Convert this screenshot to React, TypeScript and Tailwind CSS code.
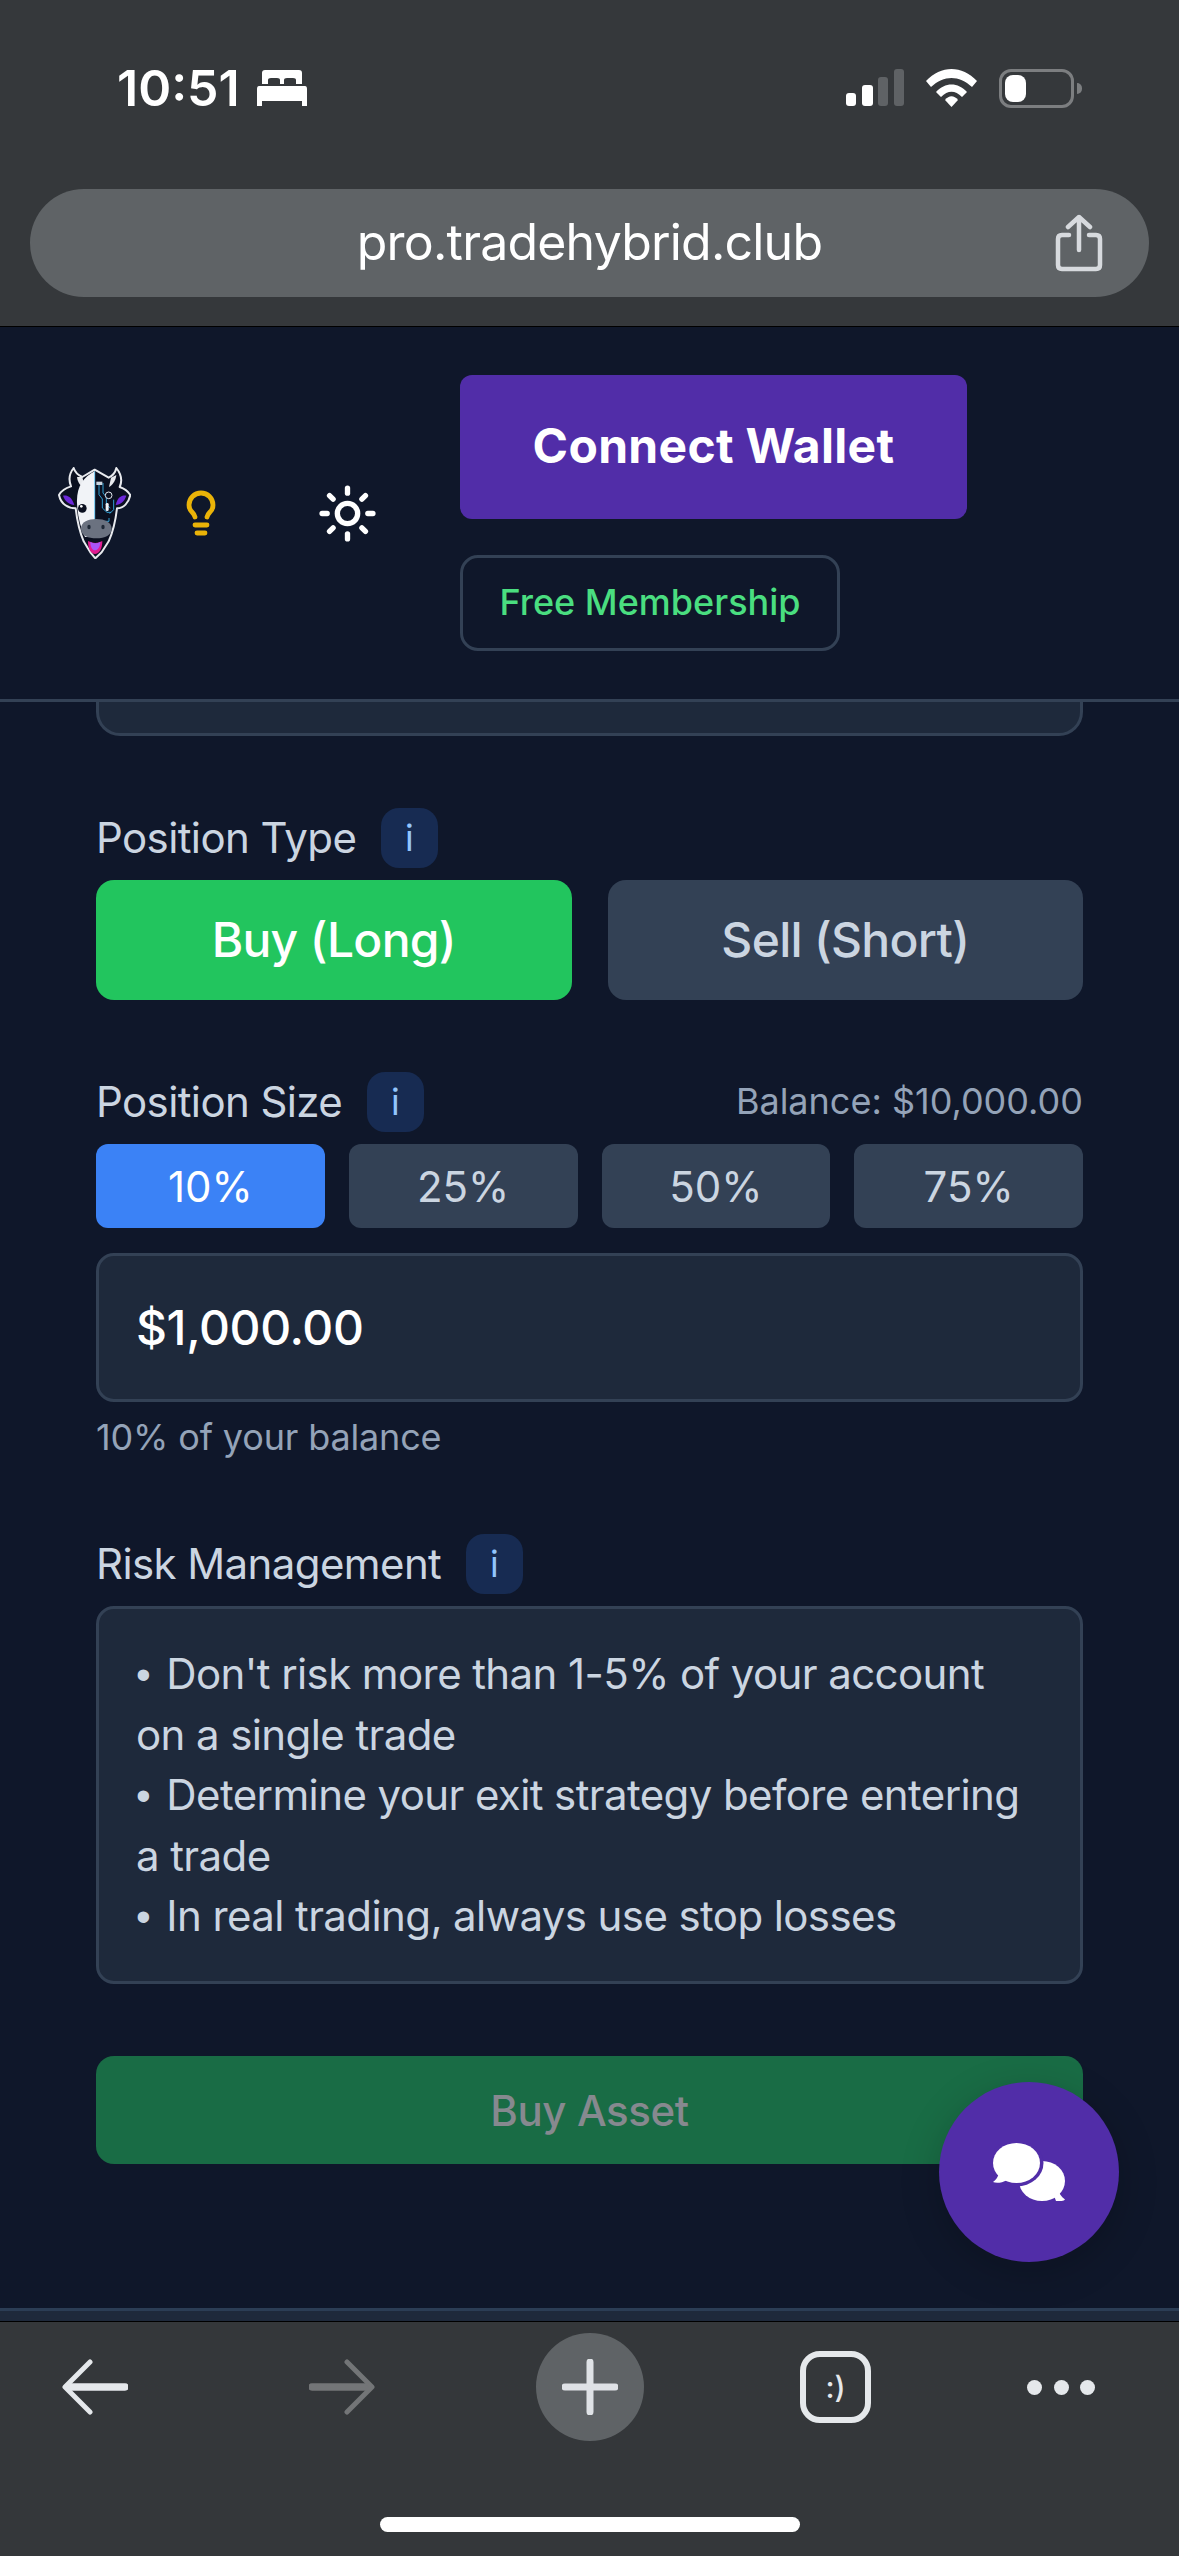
import React from "react";
import { Lightbulb, Sun } from "lucide-react";

const InfoBadge = () => (
  <span className="flex h-[60px] w-[57px] items-center justify-center rounded-[18px] bg-[#172b52] pr-[1px] text-[36px] text-[#93c5fd]">
    i
  </span>
);

const Bullet = () => <span className="mr-[5px] font-['Liberation_Sans',sans-serif]">•</span>;

const CowLogo = () => (
  <svg width="73" height="92" viewBox="55 82 215 276">
    <path
      d="M163 90 L126 112 C112 106 104 98 100 85 C88 100 84 120 92 140 C76 145 62 154 56 166 C62 195 85 206 106 206 C110 240 116 272 130 305 L150 338 L165 356 L184 338 L205 305 C220 272 226 240 230 206 C250 206 265 190 270 166 C262 153 250 146 238 142 C248 120 240 100 228 85 C225 98 218 108 205 114 Z"
      fill="#0b1020"
      stroke="#e8eaee"
      strokeWidth="6"
      strokeLinejoin="round"
    />
    <path d="M110 112 C112 130 122 140 134 146 L126 112 Z" fill="#e8eaee" />
    <path d="M228 106 C226 124 216 136 206 142 L212 114 Z" fill="#e8eaee" />
    <path d="M68 168 C82 166 94 172 102 196 C88 194 74 186 68 168 Z" fill="#6d28d9" />
    <path d="M258 168 C244 166 232 172 226 196 C240 194 252 186 258 168 Z" fill="#6d28d9" />
    <path d="M163 95 C130 112 108 140 110 190 C112 230 120 262 134 292 L163 292 Z" fill="#f1f3f7" />
    <path d="M163 95 V240" stroke="#7dd3fc" strokeWidth="3" />
    <path
      d="M176 135 V165 L186 178 V205 L200 218 H212 M188 130 V160 L198 172 V195 L210 205 M206 235 V245 H180 M220 180 V210 L208 222"
      fill="none"
      stroke="#38bdf8"
      strokeWidth="2.5"
    />
    <rect x="168" y="126" width="18" height="10" fill="#cbd5e1" />
    <circle cx="205" cy="167" r="10" fill="#0b1020" stroke="#e2e8f0" strokeWidth="3" />
    <rect x="196" y="190" width="9" height="24" rx="4" fill="#f1f5f9" />
    <circle cx="126" cy="206" r="13" fill="#0b1020" />
    <circle cx="123" cy="200" r="4" fill="#fff" />
    <path d="M122 268 C122 246 144 238 168 238 C194 238 214 248 214 268 C214 286 194 296 168 296 C144 296 122 288 122 268 Z" fill="#6b7280" />
    <ellipse cx="146" cy="262" rx="5" ry="7" fill="#1f2937" />
    <ellipse cx="188" cy="262" rx="5" ry="7" fill="#1f2937" />
    <path d="M143 304 C158 312 172 312 186 304 C186 328 176 343 164 343 C152 343 143 328 143 304 Z" fill="#e11d8f" />
    <path d="M150 306 C160 312 170 312 180 306 C180 322 172 332 164 332 C156 332 150 322 150 306 Z" fill="#a855f7" />
  </svg>
);

const ShareIcon = () => (
  <svg width="48" height="58" viewBox="0 0 48 58" fill="none" stroke="#d7dade" strokeWidth="4.5" strokeLinecap="round" strokeLinejoin="round">
    <path d="M14 21 H7 Q3 21 3 25 V51 Q3 55 7 55 H41 Q45 55 45 51 V25 Q45 21 41 21 H34" />
    <path d="M24 36 V3 M13 13 L24 3 L35 13" />
  </svg>
);

const ChatIcon = () => (
  <svg width="72" height="58" viewBox="0 0 72 58">
    <ellipse cx="49" cy="38" rx="23" ry="20" fill="#fff" />
    <path d="M60 50 L63 58 C67 58.5 71 58 72 56.5 C68 54 66 50 65 46 Z" fill="#fff" />
    <ellipse cx="23.5" cy="20" rx="27" ry="23.5" fill="#512da8" />
    <ellipse cx="23.5" cy="20" rx="23.5" ry="20" fill="#fff" />
    <path d="M6 30 C5 34 3 37 0 39 C3 40.5 9 40 14 37 Z" fill="#fff" />
  </svg>
);

const PERCENTS = ["10%", "25%", "50%", "75%"];

export default function App() {
  return (
    <div className="relative flex h-[2556px] w-[1179px] flex-col overflow-hidden bg-[#0f172a] font-['Inter',sans-serif]">
      {/* Safari top chrome */}
      <div className="h-[326px] shrink-0 bg-[#35383b] pt-[68px]">
        <div className="flex h-[40px] items-center justify-between pl-[117px] pr-[105px]">
          <div className="flex items-center">
            <span className="text-[50px] leading-[40px] font-semibold text-white">10:51</span>
            <svg className="ml-[16px]" width="52" height="36" viewBox="0 0 52 36" fill="#fff">
              <path d="M6 3 Q6 0 9 0 H43 Q46 0 46 3 V14 H40 V10 Q40 8 37 8 H31 Q28 8 28 10 V14 H24 V10 Q24 8 21 8 H15 Q12 8 12 10 V14 H6 Z" />
              <path d="M3 16 H49 Q51 16 51 19 V36 H46 V31 H6 V36 H1 V19 Q1 16 3 16 Z" />
            </svg>
          </div>
          <div className="flex items-center">
            <svg width="58" height="38" viewBox="0 0 58 38">
              <rect x="0" y="24" width="10" height="13" rx="3" fill="#fff" />
              <rect x="16" y="16" width="11" height="21" rx="3" fill="#fff" />
              <rect x="32" y="8" width="10" height="29" rx="3" fill="#5f6265" />
              <rect x="48" y="0" width="10" height="37" rx="3" fill="#5f6265" />
            </svg>
            <svg className="ml-[22px]" width="51" height="38" viewBox="0 0 51 38" fill="#fff">
              <path d="M0 12 C15 -4 36 -4 51 12 L46 18 C33 6 18 6 5 18 Z" />
              <path d="M10 23 C19 13 32 13 41 23 L36 28 C29 21 22 21 15 28 Z" />
              <path d="M19 31 C23 26 28 26 32 31 L25.5 38 Z" />
            </svg>
            <div className="relative ml-[22px] h-[39px] w-[75px] rounded-[12px] border-[3px] border-[#7c7e80] p-[3px]">
              <div className="h-full w-[21px] rounded-[8px] bg-white" />
              <div className="absolute left-[75px] top-[11px] h-[11px] w-[5px] rounded-r-full bg-[#7c7e80]" />
            </div>
          </div>
        </div>
        <div className="mx-[30px] mt-[81px] grid h-[108px] grid-cols-[1fr_auto_1fr] items-center rounded-[54px] bg-[#5f6366]">
          <span />
          <span className="pb-[2px] text-[50px] leading-none tracking-[-0.8px] text-white">pro.tradehybrid.club</span>
          <span className="flex justify-end pr-[46px]">
            <ShareIcon />
          </span>
        </div>
      </div>
      <div className="h-px shrink-0 bg-black" />

      {/* Site header */}
      <header className="flex h-[375px] shrink-0 items-center border-b-[3px] border-[#334155] pl-[58px]">
        <CowLogo />
        <Lightbulb className="ml-[46px] shrink-0 text-[#eab308]" size={48} strokeWidth={2.4} />
        <Sun className="ml-[92px] shrink-0 text-white" size={61} strokeWidth={2.1} />
        <div className="ml-[82px] flex flex-col gap-[36px]">
          <button className="flex h-[144px] w-[507px] items-center justify-center rounded-[12px] bg-[#512da8] pb-[2px] text-[48px] font-bold tracking-[0.3px] text-white">
            Connect Wallet
          </button>
          <button className="flex h-[96px] w-[380px] items-center justify-center rounded-[18px] border-[3px] border-[#334155] pb-[2px] text-[36px] font-medium text-[#4ade80]">
            Free Membership
          </button>
        </div>
      </header>

      {/* Trade form */}
      <main className="flex-1 px-[96px]">
        <div className="h-[34px] rounded-b-[24px] border-x-[3px] border-b-[3px] border-[#334155] bg-[#1e293b]" />

        <div className="mt-[72px] flex h-[60px] items-center gap-[25px]">
          <span className="pb-[2px] text-[42px] tracking-[-0.6px] text-[#cbd5e1]">Position Type</span>
          <InfoBadge />
        </div>
        <div className="mt-[12px] grid grid-cols-2 gap-[36px]">
          <button className="h-[120px] rounded-[18px] bg-[#22c55e] text-[48px] font-medium tracking-[-0.7px] text-white">Buy (Long)</button>
          <button className="h-[120px] rounded-[18px] bg-[#334155] text-[48px] font-medium tracking-[-0.7px] text-[#cbd5e1]">Sell (Short)</button>
        </div>

        <div className="mt-[72px] flex h-[60px] items-center">
          <span className="pb-[2px] text-[42px] tracking-[-0.6px] text-[#cbd5e1]">Position Size</span>
          <span className="ml-[25px]">
            <InfoBadge />
          </span>
          <span className="ml-auto pb-[2px] text-[36px] text-[#94a3b8]">Balance: $10,000.00</span>
        </div>
        <div className="mt-[12px] grid grid-cols-4 gap-[24px]">
          {PERCENTS.map((p, i) => (
            <button
              key={p}
              className={
                i === 0
                  ? "h-[84px] rounded-[12px] bg-[#3b82f6] text-[42px] text-white"
                  : "h-[84px] rounded-[12px] bg-[#334155] text-[42px] text-[#cbd5e1]"
              }
            >
              {p}
            </button>
          ))}
        </div>
        <div className="mt-[25px] flex h-[149px] items-center rounded-[18px] border-[3px] border-[#334155] bg-[#1e293b] pl-[37px] text-[48px] font-medium tracking-[-0.4px] text-white">
          $1,000.00
        </div>
        <p className="mt-[14px] text-[36px] leading-[42px] tracking-[-0.15px] text-[#94a3b8]">10% of your balance</p>

        <div className="mt-[76px] flex h-[60px] items-center gap-[25px]">
          <span className="pb-[2px] text-[42px] tracking-[-0.6px] text-[#cbd5e1]">Risk Management</span>
          <InfoBadge />
        </div>
        <div className="mt-[12px] flex h-[378px] items-center rounded-[18px] border-[3px] border-[#334155] bg-[#1e293b] pl-[37px] pr-[52px] text-[42px] leading-[60px] tracking-[-0.6px] text-[#cbd5e1]">
          <p>
            <Bullet /> Don't risk more than 1-5% of your account on a single trade
            <br />
            <Bullet /> Determine your exit strategy before entering a trade
            <br />
            <Bullet /> In real trading, always use stop losses
          </p>
        </div>
        <button className="mt-[72px] h-[108px] w-full rounded-[18px] bg-[#196c45] text-[42px] font-medium tracking-[-0.4px] text-[#86898f]">
          Buy Asset
        </button>
      </main>

      <div className="h-[13px] shrink-0 border-t-[3px] border-[#2b3d55] bg-[#1e293b]" />
      <div className="h-px shrink-0 bg-black" />

      {/* Safari bottom toolbar */}
      <div className="h-[234px] shrink-0 bg-[#34373a] pt-[11px]">
        <div className="flex h-[108px] items-center pl-[62px]">
          <svg width="66" height="56" viewBox="0 0 66 56" fill="none" strokeLinecap="round" strokeLinejoin="round">
            <path d="M6 28 H63" stroke="#e5e8eb" strokeWidth="7.5" />
            <path d="M28 3 L3 28 L28 53" stroke="#e5e8eb" strokeWidth="5" />
          </svg>
          <svg className="ml-[181px]" width="66" height="56" viewBox="0 0 66 56" fill="none" strokeLinecap="round" strokeLinejoin="round">
            <path d="M3 28 H60" stroke="#737577" strokeWidth="7.5" />
            <path d="M38 3 L63 28 L38 53" stroke="#737577" strokeWidth="5" />
          </svg>
          <div className="ml-[161px] flex h-[108px] w-[108px] items-center justify-center rounded-full bg-[#5f6366]">
            <svg width="56" height="56" viewBox="0 0 56 56" stroke="#dfe2e6" strokeWidth="7" strokeLinecap="round">
              <path d="M28 3 V53 M3 28 H53" />
            </svg>
          </div>
          <div className="ml-[156px] flex h-[72px] w-[71px] items-center justify-center rounded-[20px] border-[6px] border-[#e5e8eb] text-[30px] font-medium text-[#e5e8eb]">
            :)
          </div>
          <div className="ml-[156px] flex w-[68px] justify-between">
            <span className="h-[15px] w-[15px] rounded-full bg-[#e5e8eb]" />
            <span className="h-[15px] w-[15px] rounded-full bg-[#e5e8eb]" />
            <span className="h-[15px] w-[15px] rounded-full bg-[#e5e8eb]" />
          </div>
        </div>
        <div className="mx-auto mt-[76px] h-[15px] w-[420px] rounded-full bg-white" />
      </div>

      {/* Floating chat button */}
      <button className="absolute left-[939px] top-[2082px] flex h-[180px] w-[180px] items-center justify-center rounded-full bg-[#512da8] shadow-[0_10px_40px_rgba(0,0,0,0.2)]">
        <ChatIcon />
      </button>
    </div>
  );
}
